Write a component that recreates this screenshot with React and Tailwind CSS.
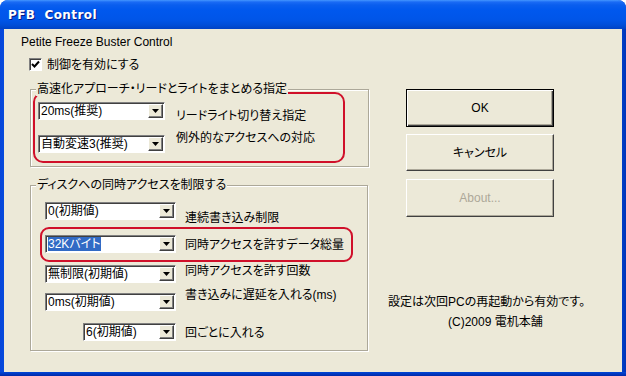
import React from "react";

const FONT = "font-['Liberation_Sans','Noto_Sans_CJK_JP',sans-serif] [font-feature-settings:'palt']";

function Arrow() {
  return (
    <svg width="7" height="4" viewBox="0 0 7 4" className="block">
      <path d="M0 0H7L3.5 4Z" fill="#000" />
    </svg>
  );
}

function Combo({ className, text, selected }) {
  return (
    <div
      className={`flex h-[18px] shrink-0 items-stretch border border-t-[#808080] border-l-[#808080] border-b-[#ffffff] border-r-[#ffffff] bg-white shadow-[inset_1px_1px_0_#404040] ${className}`}
    >
      <div className="flex-1 overflow-hidden pl-[2px] pt-[1px] leading-[14px] whitespace-nowrap">
        {selected ? (
          <span className="bg-[#316AC5] text-white">{text}</span>
        ) : (
          text
        )}
      </div>
      <div className="my-[1px] mr-[1px] flex w-[15px] items-center justify-center border border-t-[#ffffff] border-l-[#ffffff] border-b-[#404040] border-r-[#404040] bg-[#ECE9D8] shadow-[inset_-1px_-1px_0_#808080]">
        <Arrow />
      </div>
    </div>
  );
}

function Label({ children, className }) {
  return (
    <div className={`self-start leading-[14px] whitespace-nowrap ${className}`}>
      {children}
    </div>
  );
}

function Btn({ children, def, disabled, className }) {
  return (
    <div
      className={`flex w-[148px] items-center justify-center bg-[#ECE9D8] ${
        def
          ? "border border-black shadow-[inset_1px_1px_0_#ffffff,inset_-1px_-1px_0_#404040,inset_-2px_-2px_0_#ACA899]"
          : "border border-t-[#ffffff] border-l-[#ffffff] border-b-[#404040] border-r-[#404040] shadow-[inset_-1px_-1px_0_#ACA899]"
      } ${disabled ? "text-[#ACA899]" : "text-black"} ${className}`}
    >
      {children}
    </div>
  );
}

function Group({ label, className, children }) {
  return (
    <div
      className={`relative ml-[26px] border border-[#ACA899] shadow-[inset_1px_1px_0_#ffffff,1px_1px_0_#ffffff] ${className}`}
    >
      <div className="absolute -top-[8px] left-[5px] bg-[#ECE9D8] px-[1px] leading-[14px] whitespace-nowrap">
        {label}
      </div>
      {children}
    </div>
  );
}

export default function App() {
  return (
    <div className={`w-[626px] h-[376px] bg-white text-[12px] text-black ${FONT}`}>
      <div className="flex h-full w-full flex-col overflow-hidden rounded-t-[8px] bg-[linear-gradient(to_right,#0746D9,#0052E6_2%,#0052E6_98%,#0034B8)]">
        {/* Title bar */}
        <div className="flex h-[29px] shrink-0 items-center bg-[linear-gradient(to_bottom,#4496FF_0px,#1A6BF5_2px,#0A5EEE_5px,#0058EE_10px,#0055E8_20px,#004ED8_25px,#0042C4_29px)] pl-[8px]">
          <span className="font-['DejaVu_Sans',sans-serif] text-[12px] font-bold tracking-[0.4px] text-white [text-shadow:1px_1px_0_#0A1883]">
            PFB&nbsp; Control
          </span>
        </div>
        {/* Body */}
        <div className="mx-[4px] flex h-[343px] shrink-0 bg-[#ECE9D8]">
          {/* Left column */}
          <div className="flex w-[365px] shrink-0 flex-col">
            <div className="pl-[17px] pt-[6px] leading-[14px]">Petite Freeze Buster Control</div>
            <div className="mt-[9px] flex h-[13px] items-center pl-[25px]">
              <div className="flex h-[13px] w-[13px] items-center justify-center border border-t-[#808080] border-l-[#808080] border-b-[#ffffff] border-r-[#ffffff] bg-white shadow-[inset_1px_1px_0_#404040]">
                <svg width="9" height="9" viewBox="0 0 9 9">
                  <path d="M1 4L3.5 6.5L8 1.5" stroke="#000" strokeWidth="2" fill="none" />
                </svg>
              </div>
              <span className="ml-[5px] leading-[14px]">制御を有効にする</span>
            </div>

            <Group label="高速化アプローチ・リードとライトをまとめる指定" className="mt-[18px] h-[78px] w-[339px]">
              <div className="ml-[2px] mt-[2px] h-[71px] w-[312px] rounded-[10px] border-2 border-[#D0102A] pl-[3px] pt-[8px]">
                <div className="flex h-[18px]">
                  <Combo className="w-[127px]" text="20ms(推奨)" />
                  <Label className="ml-[11px] mt-[7px]">リードライト切り替え指定</Label>
                </div>
                <div className="mt-[15px] flex h-[18px]">
                  <Combo className="w-[127px]" text="自動変速3(推奨)" />
                  <Label className="ml-[11px] -mt-[4px]">例外的なアクセスへの対応</Label>
                </div>
              </div>
            </Group>

            <Group label="ディスクへの同時アクセスを制限する" className="mt-[18px] h-[166px] w-[338px]">
              <div className="flex h-[18px] pl-[14px] mt-[16px]">
                <Combo className="w-[131px]" text="0(初期値)" />
                <Label className="ml-[9px] mt-[9px]">連続書き込み制限</Label>
              </div>
              <div className="ml-[9px] mt-[7px] h-[35px] w-[313px] rounded-[9px] border-2 border-[#D0102A] pl-[3px] pt-[6px]">
                <div className="flex h-[18px]">
                  <Combo className="w-[131px]" text="32Kバイト" selected />
                  <Label className="ml-[9px] mt-[3px]">同時アクセスを許すデータ総量</Label>
                </div>
              </div>
              <div className="mt-[3px] flex h-[18px] pl-[14px]">
                <Combo className="w-[131px]" text="無制限(初期値)" />
                <Label className="ml-[9px] -mt-[1px]">同時アクセスを許す回数</Label>
              </div>
              <div className="mt-[10px] flex h-[18px] pl-[14px]">
                <Combo className="w-[131px]" text="0ms(初期値)" />
                <Label className="ml-[9px] -mt-[5px]">書き込みに遅延を入れる(ms)</Label>
              </div>
              <div className="mt-[12px] flex h-[18px] pl-[52px]">
                <Combo className="w-[93px]" text="6(初期値)" />
                <Label className="ml-[9px] mt-[3px]">回ごとに入れる</Label>
              </div>
            </Group>
          </div>

          {/* Right column */}
          <div className="flex flex-1 flex-col">
            <Btn def className="ml-[37px] mt-[60px] h-[38px]">OK</Btn>
            <Btn className="ml-[37px] mt-[7px] h-[37px]">キャンセル</Btn>
            <Btn disabled className="ml-[37px] mt-[8px] h-[38px]">About...</Btn>
            <div className="ml-[19px] mt-[78px] leading-[14px] whitespace-nowrap">
              設定は次回PCの再起動から有効です。
            </div>
            <div className="ml-[79px] mt-[6px] leading-[14px] whitespace-nowrap">
              (C)2009 電机本舗
            </div>
          </div>
        </div>
        <div className="flex-1 bg-[linear-gradient(to_bottom,#0046D6,#0028A8)]"></div>
      </div>
    </div>
  );
}
